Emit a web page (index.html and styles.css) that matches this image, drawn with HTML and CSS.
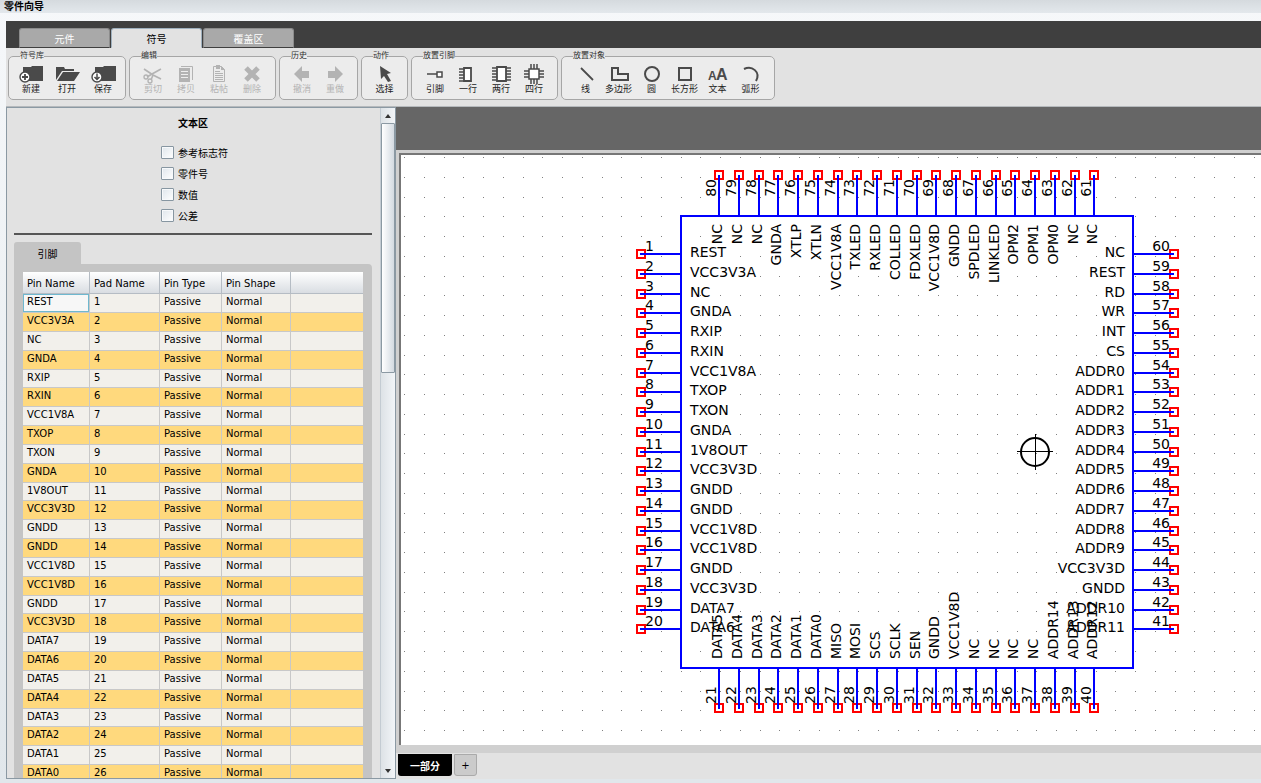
FILE: index.html
```html
<!DOCTYPE html>
<html lang="zh-CN">
<head>
  <meta charset="UTF-8" />
  <meta name="viewport" content="width=device-width, initial-scale=1" />
  <title>零件向导</title>
  <link rel="stylesheet" href="styles.css">
</head>
<body>
  <h1 class="titlebar">零件向导</h1>

  <div class="wizard">
    <nav class="tabs">
      <button class="tab">元件</button>
      <button class="tab active">符号</button>
      <button class="tab">覆盖区</button>
    </nav>

    <div class="toolbar">
      <fieldset class="group library">
        <legend>符号库</legend>
        <button class="tool">
          <svg viewBox="0 0 24 20"><path fill="currentColor" d="M4 3h8l1-1h11v15H4z"/><circle cx="6" cy="13" r="5" fill="#fff" stroke="currentColor" stroke-width="1.4"/><path stroke="currentColor" stroke-width="1.8" d="M3 13h6M6 10v6"/></svg>
          新建
        </button>
        <button class="tool">
          <svg viewBox="0 0 24 20"><path fill="currentColor" d="M1 16V3h8l1 2h9v2H7zM8 8h17l-6 9H2z"/></svg>
          打开
        </button>
        <button class="tool">
          <svg viewBox="0 0 24 20"><path fill="currentColor" d="M4 3h8l1-1h12v15H4z"/><circle cx="6" cy="13" r="5" fill="#fff" stroke="currentColor" stroke-width="1.4"/><path fill="none" stroke="currentColor" stroke-width="1.5" d="M6 9.5v6M3.5 13L6 15.5 8.5 13"/></svg>
          保存
        </button>
      </fieldset>

      <fieldset class="group edit">
        <legend>编辑</legend>
        <button class="tool" disabled>
          <svg viewBox="0 0 24 20"><path fill="none" stroke="currentColor" stroke-width="1.6" d="M3 5l9 6 8 4M20 5l-9 5-5 3M12 11l-2 5"/><circle cx="5" cy="13" r="2" fill="none" stroke="currentColor" stroke-width="1.3"/><circle cx="9" cy="17" r="2" fill="none" stroke="currentColor" stroke-width="1.3"/></svg>
          剪切
        </button>
        <button class="tool" disabled>
          <svg viewBox="0 0 24 20"><path fill="currentColor" d="M5 4h11v14H5z"/><path fill="none" stroke="currentColor" d="M7 2.5h11.500V16"/><path stroke="#eee" d="M7 7.500h7M7 10.500h7M7 13.500h7"/></svg>
          拷贝
        </button>
        <button class="tool" disabled>
          <svg viewBox="0 0 24 20"><path fill="none" stroke="currentColor" d="M6.500 2.500h8l3 3v12h-11z"/><path fill="currentColor" d="M9 1h4v4H9zM14 2v4h4z"/><path stroke="currentColor" d="M8 7.500h5M8 9.500h8M8 11.500h8M8 13.500h8M8 15.500h8"/></svg>
          粘帖
        </button>
        <button class="tool" disabled>
          <svg viewBox="0 0 24 20"><path stroke="currentColor" stroke-width="5" d="M6 4l12 12M18 4L6 16"/></svg>
          删除
        </button>
      </fieldset>

      <fieldset class="group history">
        <legend>历史</legend>
        <button class="tool" disabled>
          <svg viewBox="0 0 24 20"><path fill="currentColor" d="M4 10l8-8v5h7v7h-7v4z"/></svg>
          撤消
        </button>
        <button class="tool" disabled>
          <svg viewBox="0 0 24 20"><path fill="currentColor" d="M20 10l-8-8v5H5v7h7v4z"/></svg>
          重做
        </button>
      </fieldset>

      <fieldset class="group action">
        <legend>动作</legend>
        <button class="tool">
          <svg viewBox="0 0 24 20"><path fill="currentColor" d="M7 2l11 7-4 1 4 7-3 1-4-6-3 3z"/></svg>
          选择
        </button>
      </fieldset>

      <fieldset class="group pins">
        <legend>放置引脚</legend>
        <button class="tool">
          <svg viewBox="0 0 24 20"><path stroke="currentColor" stroke-width="1.5" d="M4 10h10"/><path fill="#fff" stroke="currentColor" stroke-width="1.5" d="M14 8h5v5h-5z"/></svg>
          引脚
        </button>
        <button class="tool">
          <svg viewBox="0 0 24 20"><path stroke="currentColor" stroke-width="1.5" d="M3 5h7M3 8h7M3 11h7M3 14h7M3 17h7"/><path fill="#fff" stroke="currentColor" stroke-width="1.8" d="M8 4h7v13H8z"/></svg>
          一行
        </button>
        <button class="tool">
          <svg viewBox="0 0 24 20"><path stroke="currentColor" stroke-width="1.5" d="M3 4h19M3 7h19M3 10h19M3 13h19M3 16h19"/><path fill="#fff" stroke="currentColor" stroke-width="1.8" d="M8 3h9v14H8z"/></svg>
          两行
        </button>
        <button class="tool">
          <svg viewBox="0 0 24 20"><path stroke="currentColor" stroke-width="1.5" d="M2 7h20M2 10h20M2 13h20M9 0v20M12 0v20M15 0v20"/><path fill="#fff" stroke="currentColor" stroke-width="1.5" d="M7 5h10v10H7z"/></svg>
          四行
        </button>
      </fieldset>

      <fieldset class="group objects">
        <legend>放置对象</legend>
        <button class="tool">
          <svg viewBox="0 0 24 20"><path stroke="currentColor" stroke-width="1.8" d="M7 4l12 12"/></svg>
          线
        </button>
        <button class="tool">
          <svg viewBox="0 0 24 20"><path fill="none" stroke="currentColor" stroke-width="2" d="M5 4h6v6h10v6H5z"/></svg>
          多边形
        </button>
        <button class="tool">
          <svg viewBox="0 0 24 20"><circle cx="12" cy="10" r="7" fill="none" stroke="currentColor" stroke-width="2"/></svg>
          圆
        </button>
        <button class="tool">
          <svg viewBox="0 0 24 20"><path fill="none" stroke="currentColor" stroke-width="2" d="M6 4h12v12H6z"/></svg>
          长方形
        </button>
        <button class="tool">
          <svg class="letters" viewBox="0 0 24 20"><text x="2" y="16" font-size="12">A</text><text x="10" y="16" font-size="16">A</text></svg>
          文本
        </button>
        <button class="tool">
          <svg viewBox="0 0 24 20"><path fill="none" stroke="currentColor" stroke-width="2" d="M5 5c8-4 17 3 12 12"/></svg>
          弧形
        </button>
      </fieldset>
    </div>

    <main class="workspace">
      <aside class="side">
        <div class="side-content">
          <h2>文本区</h2>
          <div class="checks">
            <label><input type="checkbox"> 参考标志符</label>
            <label><input type="checkbox"> 零件号</label>
            <label><input type="checkbox"> 数值</label>
            <label><input type="checkbox"> 公差</label>
          </div>
          <hr>
          <button class="pin-tab">引脚</button>
          <div class="pin-panel">
            <table>
              <colgroup>
                <col class="col-name"><col class="col-pad"><col class="col-type"><col class="col-shape"><col>
              </colgroup>
              <thead>
                <tr><th>Pin Name</th><th>Pad Name</th><th>Pin Type</th><th>Pin Shape</th><th></th></tr>
              </thead>
              <tbody id="pinRows"></tbody>
            </table>
          </div>
        </div>
        <div class="scrollbar">
          <span class="arrow up"></span>
          <span class="thumb"></span>
          <span class="arrow down"></span>
        </div>
      </aside>

      <section class="editor">
        <div class="editor-head"></div>
        <div class="frame">
          <svg class="canvas" id="canvas"></svg>
        </div>
        <footer class="sections">
          <button class="section active">一部分</button>
          <button class="section add">+</button>
        </footer>
      </section>
    </main>
  </div>

  <script>
    const left = ['REST', 'VCC3V3A', 'NC', 'GNDA', 'RXIP', 'RXIN', 'VCC1V8A', 'TXOP', 'TXON', 'GNDA',
      '1V8OUT', 'VCC3V3D', 'GNDD', 'GNDD', 'VCC1V8D', 'VCC1V8D', 'GNDD', 'VCC3V3D', 'DATA7', 'DATA6'];
    const bottom = ['DATA5', 'DATA4', 'DATA3', 'DATA2', 'DATA1', 'DATA0', 'MISO', 'MOSI', 'SCS', 'SCLK',
      'SEN', 'GNDD', 'VCC1V8D', 'NC', 'NC', 'NC', 'NC', 'ADDR14', 'ADDR13', 'ADDR12'];
    // right and top are listed from the highest pad number down
    const right = ['NC', 'REST', 'RD', 'WR', 'INT', 'CS', 'ADDR0', 'ADDR1', 'ADDR2', 'ADDR3',
      'ADDR4', 'ADDR5', 'ADDR6', 'ADDR7', 'ADDR8', 'ADDR9', 'VCC3V3D', 'GNDD', 'ADDR10', 'ADDR11'];
    const topSide = ['NC', 'NC', 'NC', 'GNDA', 'XTLP', 'XTLN', 'VCC1V8A', 'TXLED', 'RXLED', 'COLLED',
      'FDXLED', 'VCC1V8D', 'GNDD', 'SPDLED', 'LINKLED', 'OPM2', 'OPM1', 'OPM0', 'NC', 'NC'];

    const visibleRows = 26;
    document.getElementById('pinRows').innerHTML = left.concat(bottom).slice(0, visibleRows).map((name, i) =>
      `<tr><td>${name}</td><td>${i + 1}</td><td>Passive</td><td>Normal</td><td></td></tr>`
    ).join('');

    const step = n => Math.round(n * 19.76);

    function pad(x, y) {
      return `<rect class="pad" x="${x - 4}" y="${y - 4}" width="8" height="8"/>`;
    }

    function label(text, x, y, cls, vertical) {
      const turn = vertical ? ` transform="rotate(-90 ${x} ${y})"` : '';
      return `<text class="${cls}" x="${x}" y="${y}"${turn}>${text}</text>`;
    }

    function drawGrid() {
      let d = '';
      for (let r = 0; r < 60; r++) {
        for (let c = 0; c < 130; c++) {
          d += `M${step(c) + 3} ${step(r) + 2.5}h1`;
        }
      }
      return `<path class="dots" d="${d}"/>`;
    }

    function drawChip() {
      let out = '<rect class="body" x="280" y="61" width="452" height="452"/>';
      for (let i = 0; i < 20; i++) {
        const y = 99 + step(i);
        const x = 318 + step(i);
        out += pad(240, y) + `<path class="wire" d="M239 ${y}h41"/>`;
        out += label(i + 1, 244, y - 3, 'num') + label(left[i], 289, y + 3, 'name');
        out += pad(773, y) + `<path class="wire" d="M732 ${y}h41"/>`;
        out += label(60 - i, 769, y - 3, 'num end') + label(right[i], 724, y + 3, 'name end');
        out += pad(x, 20) + `<path class="wire" d="M${x} 20v41"/>`;
        out += label(80 - i, x - 3, 24, 'num end', true) + label(topSide[i], x + 3, 69, 'name end', true);
        out += pad(x, 553) + `<path class="wire" d="M${x} 513v41"/>`;
        out += label(21 + i, x - 3, 549, 'num', true) + label(bottom[i], x + 3, 504, 'name', true);
      }
      return out;
    }

    const cross = '<circle class="origin" cx="634" cy="297" r="14"/>' +
      '<path class="hair" d="M616 296.5h36M634.5 279v36"/>';

    document.getElementById('canvas').innerHTML = drawGrid() + drawChip() + cross;
  </script>
</body>
</html>
```

FILE: styles.css
```css
* {
  box-sizing: border-box;
}

body {
  display: flex;
  flex-direction: column;
  height: 100vh;
  margin: 0;
  padding-bottom: 4px;
  overflow: hidden;
  background: linear-gradient(#f6f8fa, #e1e7eb);
  font-family: "DejaVu Sans", "Noto Sans CJK SC", sans-serif;
  font-size: 10px;
  color: #000;
}

button {
  margin: 0;
  padding: 0;
  border: none;
  font: inherit;
  color: inherit;
  cursor: pointer;
}

.titlebar {
  height: 13px;
  margin: 0 0 8px;
  padding-left: 4px;
  background: linear-gradient(#d5dade, #e3e8ec);
  font-size: 10px;
  font-weight: bold;
  line-height: 13px;
}

.wizard {
  flex: 1;
  min-height: 0;
  display: flex;
  flex-direction: column;
  margin-left: 6px;
  background: #e2e2e2;
}

.tabs {
  display: flex;
  align-items: flex-end;
  gap: 1px;
  height: 27px;
  padding-left: 13px;
  background: #3f3f3f;
}

.tab {
  width: 91px;
  height: 20px;
  border: 1px solid #8c8c8c;
  border-bottom-color: #3f3f3f;
  border-radius: 3px 3px 0 0;
  background: #a9a9a9;
  color: #fff;
}

.tab.active {
  border-color: #9fb0be;
  border-bottom-color: #e2e2e2;
  background: #e2e2e2;
  color: #000;
}

.toolbar {
  display: flex;
  gap: 3px;
  height: 59px;
  padding: 2px 2px 6px;
  border-bottom: 1px solid #b5b9bc;
}

.group {
  display: flex;
  justify-content: center;
  min-width: 0;
  margin: 0;
  padding: 2px 0 0;
  border: 1px solid #a6a6a6;
  border-radius: 5px;
  background: #ececec;
}

.group legend {
  margin-left: 11px;
  padding: 0;
  font-size: 8px;
  line-height: 12px;
  color: #333;
}

.library { width: 118px; }
.edit { width: 147px; }
.history { width: 79px; }
.action { width: 47px; }
.pins { width: 147px; }
.objects { width: 214px; }

.tool {
  display: flex;
  flex-direction: column;
  align-items: center;
  width: 33px;
  background: none;
  font-size: 9px;
  line-height: 10px;
  white-space: nowrap;
  color: #222;
}

.library .tool {
  width: 36px;
}

.tool svg {
  width: 24px;
  height: 20px;
  color: #4a4a4a;
  overflow: visible;
}

.tool:disabled,
.tool:disabled svg {
  color: #b3b3b3;
}

.letters text {
  font-family: "Liberation Sans", sans-serif;
  font-weight: bold;
  fill: currentColor;
}

.workspace {
  flex: 1;
  min-height: 0;
  display: flex;
}

.side {
  display: flex;
  width: 390px;
  border: 1px solid #8b99a3;
  overflow: hidden;
}

.side-content {
  flex: 1;
  padding: 0 8px 0 7px;
  overflow: hidden;
}

.side h2 {
  margin: 8px 0 12px;
  font-size: 10px;
  line-height: 16px;
  text-align: center;
}

.checks {
  display: flex;
  flex-direction: column;
  gap: 5px;
  padding-left: 147px;
}

.checks label {
  display: flex;
  align-items: center;
  gap: 4px;
  height: 16px;
}

.checks input {
  appearance: none;
  width: 13px;
  height: 13px;
  margin: 0;
  border: 1px solid #8796a1;
  border-radius: 1px;
  background: linear-gradient(135deg, #dfe6ec, #fff);
  box-shadow: inset 0 0 0 1px #f7f9fb;
}

.side hr {
  height: 2px;
  margin: 10px 0 7px;
  border: none;
  background: #555;
}

.pin-tab {
  display: block;
  width: 67px;
  height: 22px;
  border-radius: 3px 3px 0 0;
  background: #c4c4c4;
}

.pin-panel {
  padding: 8px 9px;
  border-radius: 0 4px 0 0;
  background: #c4c4c4;
}

table {
  width: 100%;
  table-layout: fixed;
  border-collapse: separate;
  border-spacing: 0;
}

.col-name { width: 67px; }
.col-pad { width: 70px; }
.col-type { width: 62px; }
.col-shape { width: 69px; }

th {
  height: 22px;
  padding: 2px 4px 0;
  border-right: 1px solid #b5bcc4;
  border-bottom: 1px solid #b5bcc4;
  background: linear-gradient(#fff, #d9dde2);
  font-weight: normal;
  text-align: left;
}

tbody tr {
  height: 19px;
  background: #f2f0eb;
}

tbody tr:nth-child(6n+5) {
  height: 18px;
}

tbody tr:nth-child(even) {
  background: #ffd97d;
}

td {
  padding: 0 4px 2px;
  border-right: 1px solid #c8c8c8;
  border-bottom: 1px solid #c8c8c8;
  line-height: 12px;
}

th:last-child,
td:last-child {
  border-right: none;
}

tbody tr:first-child td:first-child {
  background: #f7f7f7;
  box-shadow: inset 0 0 0 1px #6fb8cf;
}

.scrollbar {
  display: flex;
  flex-direction: column;
  width: 15px;
  border-left: 1px solid #c3cbd2;
  background: linear-gradient(90deg, #dde2e6, #f2f5f8);
}

.arrow {
  display: flex;
  align-items: center;
  justify-content: center;
  height: 15px;
}

.arrow::before {
  content: "";
  border: 3px solid transparent;
}

.arrow.up::before {
  border-top: none;
  border-bottom: 4px solid #333;
}

.arrow.down {
  margin-top: auto;
}

.arrow.down::before {
  border-bottom: none;
  border-top: 4px solid #333;
}

.thumb {
  height: 250px;
  border: 1px solid #8b99a3;
  border-radius: 1px;
  background: linear-gradient(90deg, #fff, #d3dae1);
}

.editor {
  flex: 1;
  min-width: 0;
  display: flex;
  flex-direction: column;
}

.editor-head {
  height: 43px;
  background: #666;
}

.frame {
  flex: 1;
  min-height: 0;
  display: flex;
  padding: 3px 0 8px 3px;
  background: #d0d0d0;
}

.canvas {
  flex: 1;
  min-width: 0;
  border-top: 2px solid #777;
  border-left: 2px solid #777;
  background: #fff;
}

.canvas text {
  fill: #000;
  font-size: 14px;
}

.canvas .end {
  text-anchor: end;
}

.dots {
  stroke: #808080;
}

.body,
.wire {
  fill: none;
  stroke: #00f;
  stroke-width: 2;
}

.pad {
  fill: #fff;
  stroke: #f00;
  stroke-width: 2;
}

.origin {
  fill: none;
  stroke: #000;
  stroke-width: 2;
}

.hair {
  stroke: #000;
}

.sections {
  display: flex;
  gap: 2px;
  height: 26px;
  padding: 1px 2px 3px;
}

.section {
  width: 54px;
  border-radius: 0 0 3px 3px;
}

.section.active {
  background: #000;
  color: #fff;
  font-weight: bold;
}

.section.add {
  width: 23px;
  border: 1px solid #aaa;
  background: #cbcbcb;
}
```
